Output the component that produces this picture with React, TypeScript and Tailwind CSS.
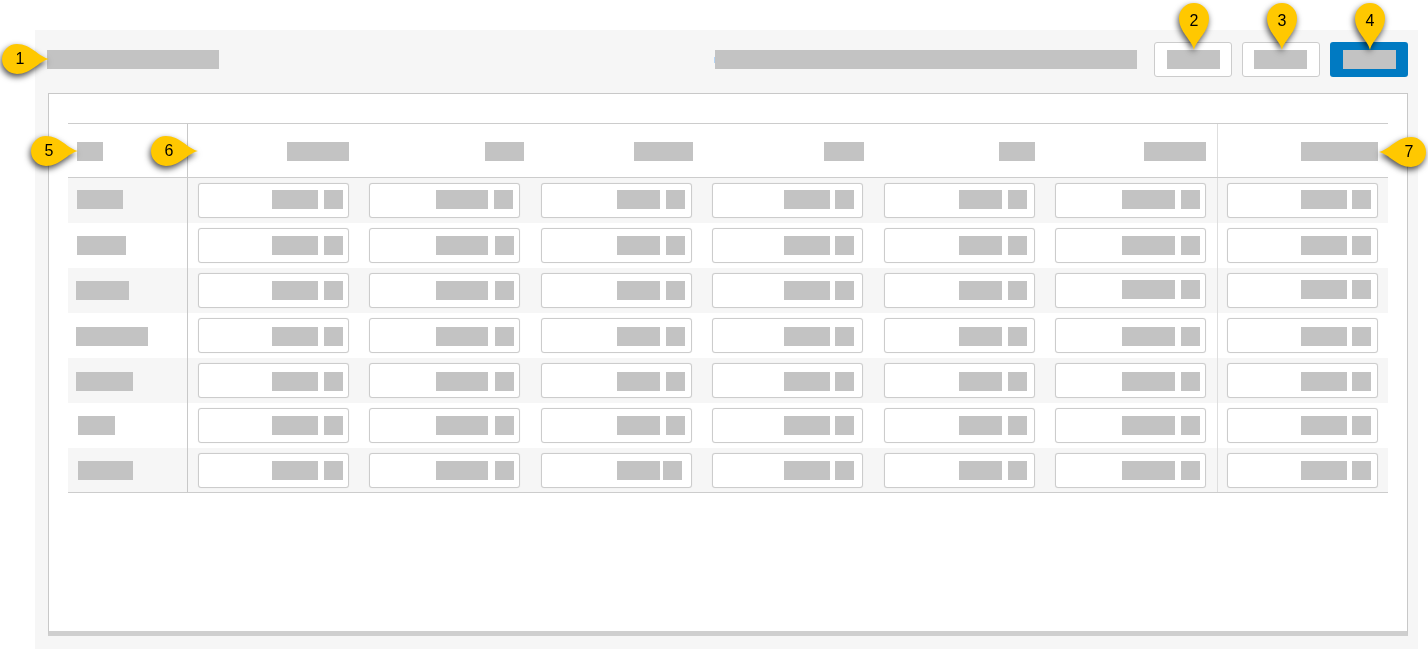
const rowTops = [7, 8, 8, 9, 9, 8, 8];
const labels = [
  { left: 9, width: 46 },
  { left: 9, width: 49 },
  { left: 8, width: 53 },
  { left: 8, width: 72 },
  { left: 8, width: 57 },
  { left: 10, width: 37 },
  { left: 10, width: 55 },
];

const columns = [
  { colWidth: "w-[171px]", value: 46, gap: 6, unit: 19, right: 6, head: 62, headRight: 10 },
  { colWidth: "w-[172px]", value: 52, gap: 7, unit: 19, right: 6, head: 39, headRight: 7 },
  { colWidth: "w-[171px]", value: 43, gap: 6, unit: 19, right: 7, head: 59, headRight: 9 },
  { colWidth: "w-[172px]", value: 46, gap: 5, unit: 19, right: 9, head: 40, headRight: 10 },
  { colWidth: "w-[171px]", value: 43, gap: 6, unit: 19, right: 8, head: 36, headRight: 10 },
  { colWidth: "w-[172px]", value: 53, gap: 6, unit: 19, right: 6, head: 62, headRight: 11 },
];

const lastColumn = { value: 46, gap: 5, unit: 19, right: 7, head: 77, headRight: 10 };

const Bar = ({ width, className = "" }: { width: number; className?: string }) => (
  <div className={`h-[19px] shrink-0 bg-[#c3c3c3] ${className}`} style={{ width }} />
);

const Amount = ({
  top,
  value,
  gap,
  unit,
  right,
}: {
  top: number;
  value: number;
  gap: number;
  unit: number;
  right: number;
}) => (
  <div
    className="flex h-[35px] w-[151px] items-start justify-end rounded-[3px] border border-[#cccccc] bg-white shadow-[0_0_1px_rgba(0,0,0,0.12)]"
    style={{ paddingTop: top - 1, paddingRight: right - 1 }}
  >
    <Bar width={value} />
    <div className="shrink-0" style={{ width: gap }} />
    <Bar width={unit} />
  </div>
);

const Row = ({ index }: { index: number }) => {
  const top = rowTops[index];
  const last = index === 6;
  return (
    <div className={`flex h-[45px] ${index % 2 === 0 ? "bg-[#f6f6f6]" : "bg-white"} ${last ? "border-b border-[#cccccc]" : ""}`}>
      <div className="w-[120px] shrink-0 border-r border-[#c8c8c8]" style={{ paddingTop: [12, 13, 13, 14, 14, 13, 13][index], paddingLeft: labels[index].left }}>
        <Bar width={labels[index].width} />
      </div>
      {columns.map((col, i) => {
        const special = last && i === 2;
        const wide = i === 1 && index === 0;
        return (
          <div key={i} className={`${col.colWidth} shrink-0 pl-[10px] pt-[5px]`}>
            <Amount
              top={i >= 5 && index === 2 ? 7 : top}
              value={col.value}
              gap={special ? 3 : wide ? 6 : col.gap}
              unit={col.unit}
              right={special ? 10 : wide ? 7 : col.right}
            />
          </div>
        );
      })}
      <div className="w-[171px] shrink-0 border-l border-[#dedede] pl-[9px] pt-[5px]">
        <Amount
          top={index === 2 ? 7 : top}
          value={lastColumn.value}
          gap={lastColumn.gap}
          unit={lastColumn.unit}
          right={lastColumn.right}
        />
      </div>
    </div>
  );
};

const pinPaths = {
  right: "M48 15C38 17 30 30 16 30A15 15 0 0 1 16 0C30 0 38 13 48 15Z",
  left: "M0 15C10 17 18 30 32 30A15 15 0 0 0 32 0C18 0 10 13 0 15Z",
  down: "M15 48C13 38 0 30 0 16A15 15 0 0 1 30 16C30 30 17 38 15 48Z",
};

const Pin = ({
  n,
  dir,
  className,
}: {
  n: number;
  dir: "right" | "left" | "down";
  className: string;
}) => {
  const isDown = dir === "down";
  return (
    <div className={`absolute drop-shadow-[-1px_3px_3px_rgba(0,0,0,0.7)] ${isDown ? "h-[48px] w-[30px]" : "h-[30px] w-[48px]"} ${className}`}>
      <svg width={isDown ? 30 : 48} height={isDown ? 48 : 30} viewBox={isDown ? "0 0 30 48" : "0 0 48 30"} className="block">
        <path d={pinPaths[dir]} fill="#ffc800" />
      </svg>
      <div
        className={`absolute flex items-center justify-center text-[16px] leading-none text-black ${
          isDown ? "left-0 top-0 h-[38px] w-[30px]" : dir === "right" ? "left-0 top-0 h-[30px] w-[38px]" : "left-[12px] top-0 h-[30px] w-[36px]"
        }`}
      >
        {n}
      </div>
    </div>
  );
};

export default function App() {
  return (
    <div className="relative h-[649px] w-[1428px] overflow-hidden bg-white font-['Liberation_Sans',Arial,sans-serif]">
      <div className="ml-[35px] h-[649px] pt-[30px]">
        <div className="h-[619px] w-[1383px] bg-[#f6f6f6] pl-[13px] pr-[10px] pt-[12px]">
          {/* toolbar */}
          <div className="flex h-[35px] items-center">
            <Bar width={172} className="-ml-[1px]" />
            <div className="flex-1" />
            <div className="h-[6px] w-[1px] bg-[#b5d5f7]" />
            <Bar width={422} />
            <div className="ml-[17px] flex gap-[10px]">
              <div className="flex h-[35px] w-[78px] items-center rounded-[3px] border border-[#cccccc] bg-white pl-[12px]">
                <Bar width={53} />
              </div>
              <div className="flex h-[35px] w-[78px] items-center rounded-[3px] border border-[#cccccc] bg-white pl-[11px]">
                <Bar width={53} />
              </div>
              <div className="flex h-[35px] w-[78px] items-center rounded-[3px] bg-[#007ac2] pl-[13px]">
                <Bar width={53} />
              </div>
            </div>
          </div>

          {/* table panel */}
          <div className="mt-[16px] h-[543px] w-[1360px] border border-b-[5px] border-[#c8c8c8] border-b-[#cfcfcf] bg-white pl-[19px] pr-[19px] pt-[29px]">
            <div className="border-t border-[#cccccc]">
              <div className="flex h-[54px] border-b border-[#cccccc]">
                <div className="w-[120px] shrink-0 border-r border-[#c8c8c8] pl-[9px] pt-[18px]">
                  <Bar width={26} />
                </div>
                {columns.map((col, i) => (
                  <div key={i} className={`${col.colWidth} flex shrink-0 justify-end pt-[18px]`} style={{ paddingRight: col.headRight }}>
                    <Bar width={col.head} />
                  </div>
                ))}
                <div className="flex w-[171px] shrink-0 justify-end border-l border-[#dedede] pt-[18px]" style={{ paddingRight: lastColumn.headRight }}>
                  <Bar width={lastColumn.head} />
                </div>
              </div>
              {rowTops.map((_, i) => (
                <Row key={i} index={i} />
              ))}
            </div>
          </div>
        </div>
      </div>

      <Pin n={1} dir="right" className="left-[1px] top-[44px]" />
      <Pin n={2} dir="down" className="left-[1179px] top-[2px]" />
      <Pin n={3} dir="down" className="left-[1267px] top-[2px]" />
      <Pin n={4} dir="down" className="left-[1355px] top-[2px]" />
      <Pin n={5} dir="right" className="left-[30px] top-[136px]" />
      <Pin n={6} dir="right" className="left-[150px] top-[136px]" />
      <Pin n={7} dir="left" className="left-[1379px] top-[137px]" />
    </div>
  );
}
